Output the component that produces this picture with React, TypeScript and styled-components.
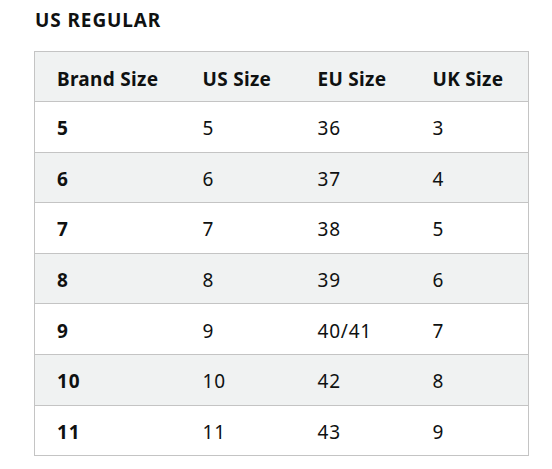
import React from "react";
import styled, { createGlobalStyle } from "styled-components";

const GlobalStyle = createGlobalStyle`
    body {
        margin: 0;
        background: #ffffff;
        font-family: "Noto Sans", "Open Sans", Arial, sans-serif;
        color: #0f1111;
    }
`;

const Page = styled.div`
    padding: 7px 23px 0 34px;
`;

const Title = styled.h2`
    margin: 0 0 18px 1px;
    font-size: 19px;
    line-height: 26px;
    font-weight: 700;
    letter-spacing: 0.9px;
    color: #0f1111;
`;

const Table = styled.table`
    width: 495px;
    border-collapse: collapse;
    border: 1px solid #c4c4c4;
    table-layout: fixed;
`;

const HeadCell = styled.th<{ $w?: number }>`
    box-sizing: border-box;
    width: ${(p) => (p.$w ? `${p.$w}px` : "auto")};
    height: 50px;
    padding: 4px 0 0 22px;
    line-height: 20px;
    text-align: left;
    font-size: 19px;
    font-weight: 700;
    letter-spacing: 0.3px;
    white-space: nowrap;
    background: #f0f2f2;
    border-bottom: 1px solid #c4c4c4;
`;

const Row = styled.tr<{ $shade: boolean }>`
    background: ${(p) => (p.$shade ? "#f0f2f2" : "#ffffff")};
`;

const Cell = styled.td<{ $bold?: boolean }>`
    height: 46.6px;
    padding: 3px 0 0 22px;
    line-height: 20px;
    font-size: 19px;
    font-weight: ${(p) => (p.$bold ? 700 : 400)};
    letter-spacing: 0.8px;
    border-bottom: 1px solid #c4c4c4;
`;

const rows = [
    ["5", "5", "36", "3"],
    ["6", "6", "37", "4"],
    ["7", "7", "38", "5"],
    ["8", "8", "39", "6"],
    ["9", "9", "40/41", "7"],
    ["10", "10", "42", "8"],
    ["11", "11", "43", "9"],
];

export default function App() {
    return (
        <>
            <GlobalStyle />
            <Page>
                <Title>US REGULAR</Title>
                <Table>
                    <thead>
                        <tr>
                            <HeadCell $w={146}>Brand Size</HeadCell>
                            <HeadCell $w={115}>US Size</HeadCell>
                            <HeadCell $w={115}>EU Size</HeadCell>
                            <HeadCell>UK Size</HeadCell>
                        </tr>
                    </thead>
                    <tbody>
                        {rows.map((r, i) => (
                            <Row key={i} $shade={i % 2 === 1}>
                                {r.map((v, j) => (
                                    <Cell key={j} $bold={j === 0}>{v}</Cell>
                                ))}
                            </Row>
                        ))}
                    </tbody>
                </Table>
            </Page>
        </>
    );
}
